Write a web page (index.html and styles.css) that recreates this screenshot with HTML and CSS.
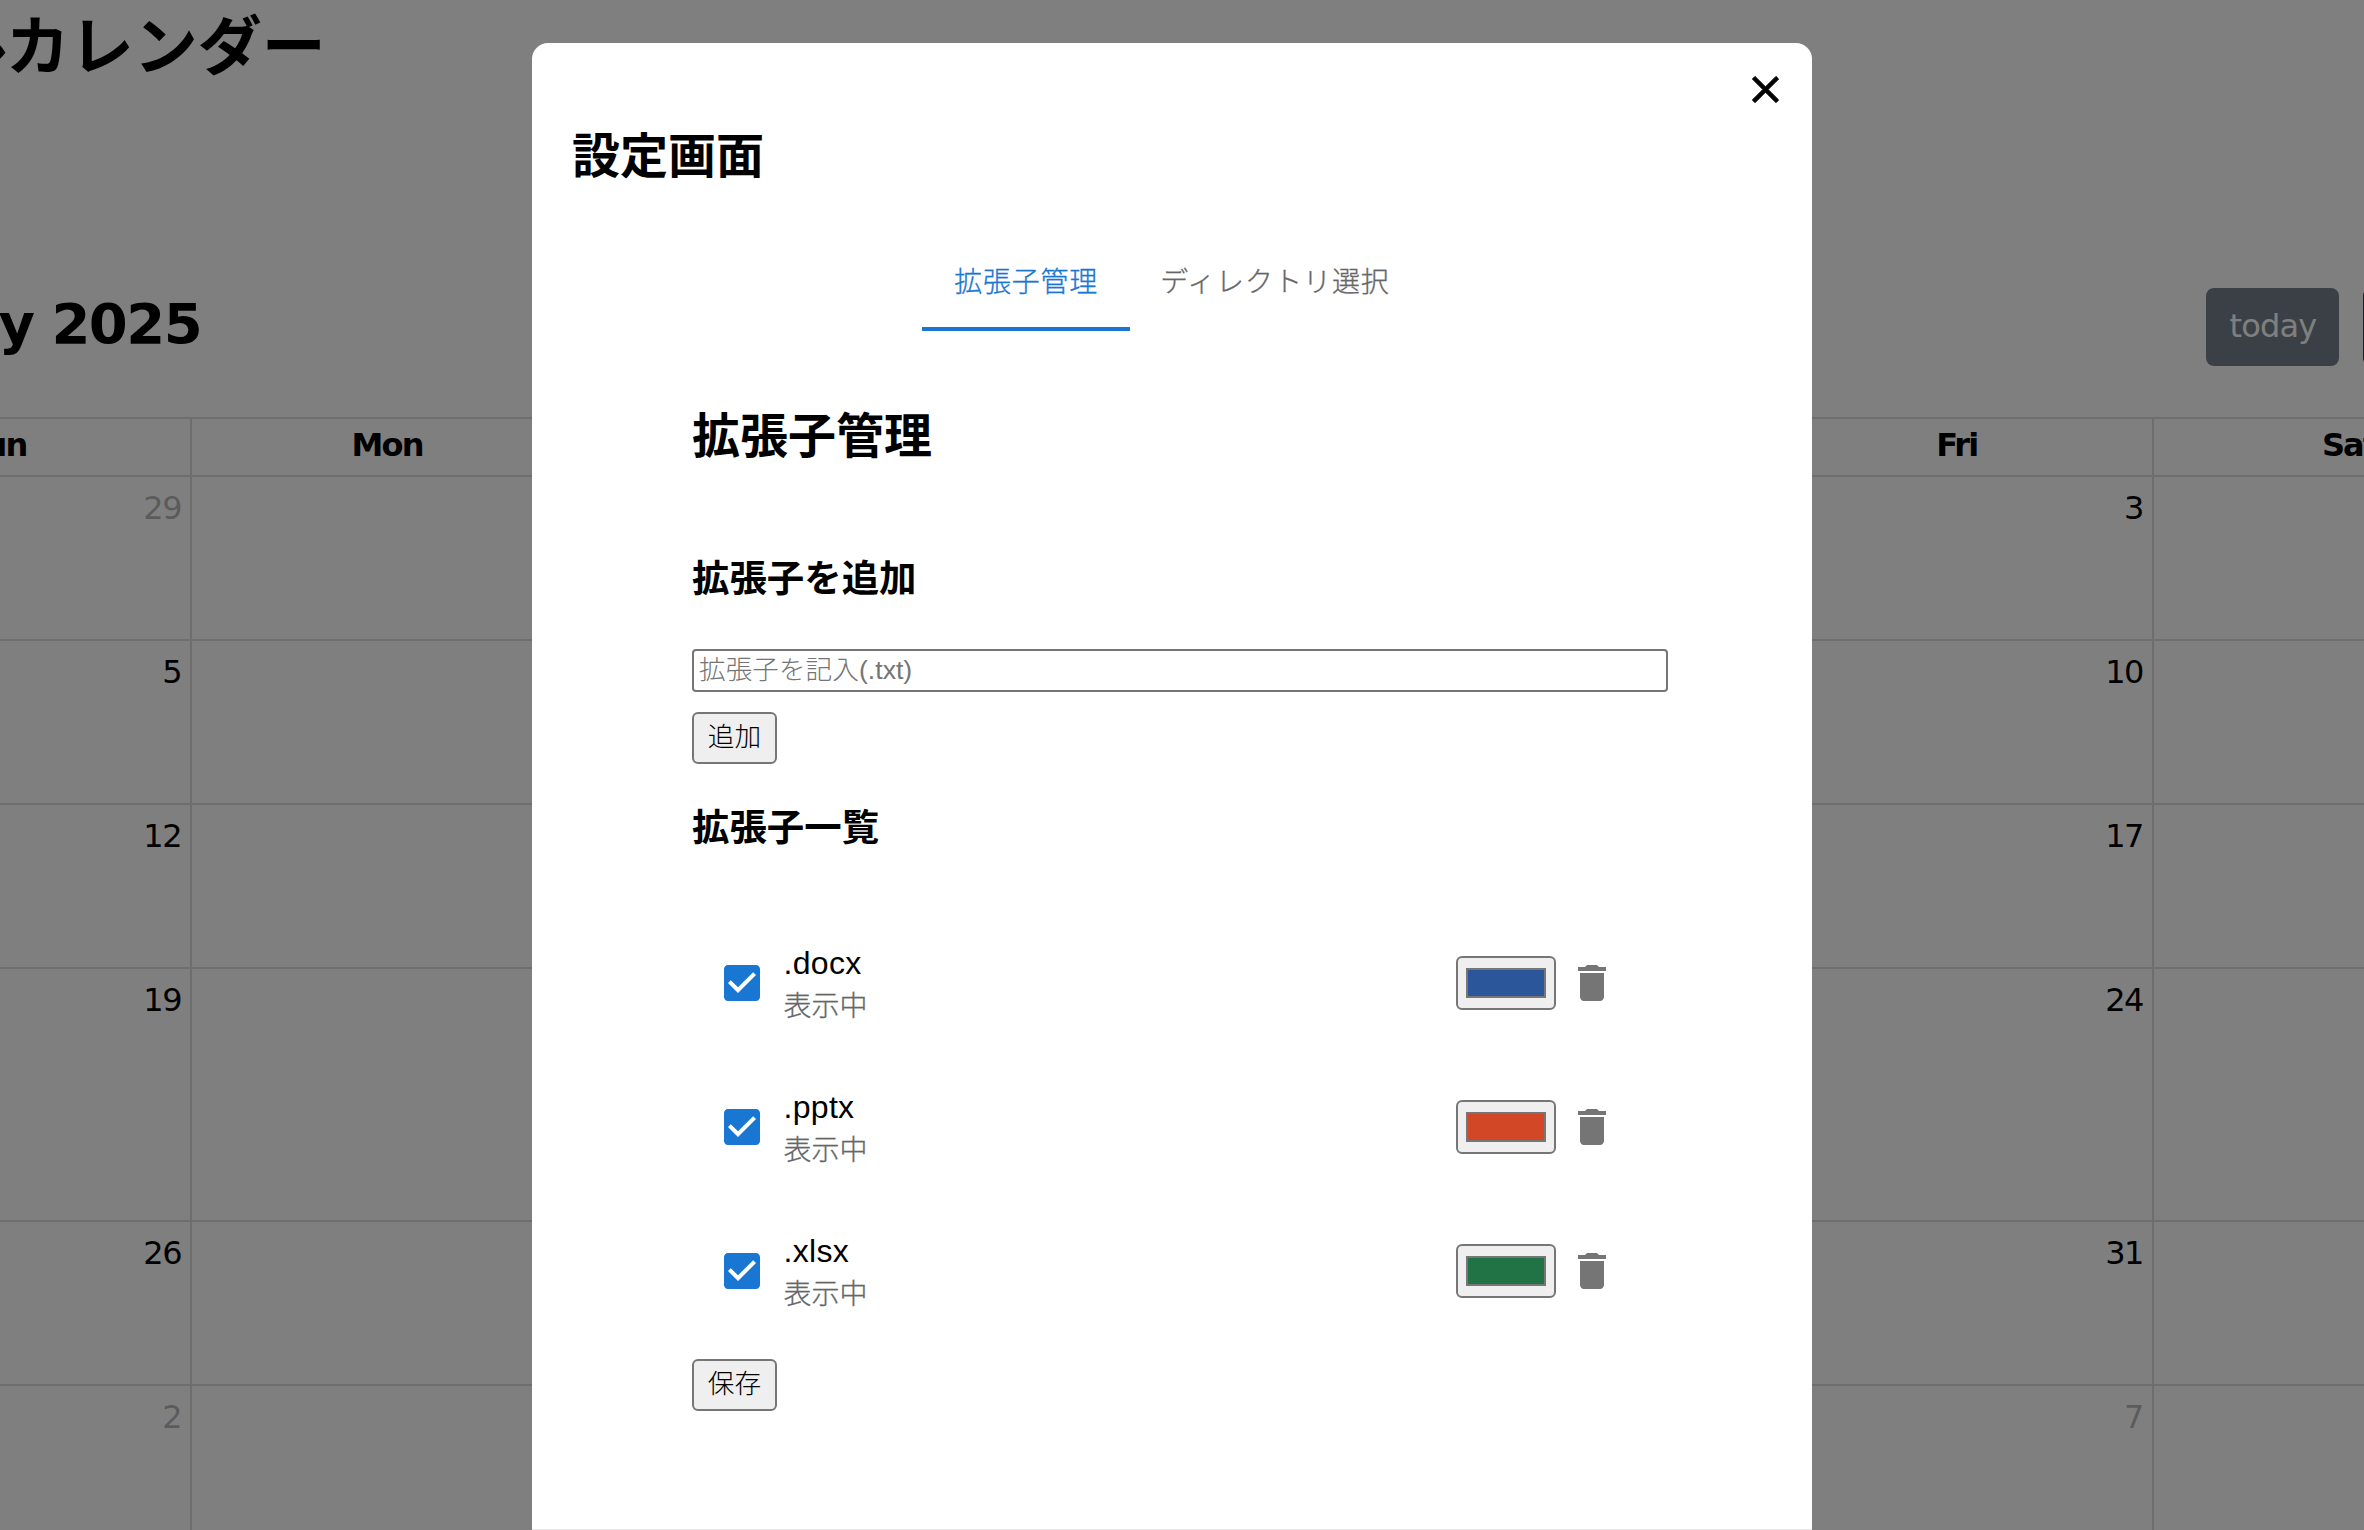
FILE: index.html
```html
<!DOCTYPE html>
<html lang="ja">
<head>
<meta charset="utf-8">
<title>設定画面</title>
<link rel="stylesheet" href="styles.css">
</head>
<body>
<main class="page">
  <h1 class="app-title">ファイルカレンダー</h1>
  <section class="calendar">
    <div class="toolbar">
      <h2 class="cal-title">January 2025</h2>
      <div class="toolbar-actions">
        <button class="cal-btn cal-today" type="button" disabled>today</button>
        <div class="cal-nav">
          <button class="cal-btn cal-arrow cal-arrow-l" type="button" aria-label="prev"></button>
          <button class="cal-btn cal-arrow cal-arrow-r" type="button" aria-label="next"></button>
        </div>
      </div>
    </div>
    <div class="grid">
      <div class="dow">Sun</div><div class="dow">Mon</div><div class="dow">Tue</div><div class="dow">Wed</div><div class="dow">Thu</div><div class="dow">Fri</div><div class="dow">Sat</div>
      <div class="day dim">29</div><div class="day dim">30</div><div class="day dim">31</div><div class="day">1</div><div class="day">2</div><div class="day">3</div><div class="day">4</div>
      <div class="day">5</div><div class="day">6</div><div class="day">7</div><div class="day">8</div><div class="day">9</div><div class="day">10</div><div class="day">11</div>
      <div class="day">12</div><div class="day">13</div><div class="day">14</div><div class="day">15</div><div class="day">16</div><div class="day">17</div><div class="day">18</div>
      <div class="day">19</div><div class="day">20</div><div class="day">21</div><div class="day">22</div><div class="day">23</div><div class="day">24</div><div class="day">25</div>
      <div class="day">26</div><div class="day">27</div><div class="day">28</div><div class="day">29</div><div class="day">30</div><div class="day">31</div><div class="day dim">1</div>
      <div class="day dim">2</div><div class="day dim">3</div><div class="day dim">4</div><div class="day dim">5</div><div class="day dim">6</div><div class="day dim">7</div><div class="day dim">8</div>
    </div>
  </section>
</main>

<div class="overlay">
  <div class="modal">
    <button class="close" type="button" aria-label="閉じる">
      <svg viewBox="0 0 24 24" class="close-icon"><path d="M19 6.41 17.59 5 12 10.59 6.41 5 5 6.41 10.59 12 5 17.59 6.41 19 12 13.41 17.59 19 19 17.59 13.41 12z"/></svg>
    </button>
    <h2 class="modal-title">設定画面</h2>
    <div class="tabs">
      <div class="tab tab-active">拡張子管理</div>
      <div class="tab tab-second">ディレクトリ選択</div>
    </div>
    <div class="panel">
      <h2 class="panel-title">拡張子管理</h2>
      <h3 class="section-title section-add">拡張子を追加</h3>
      <input class="ext-input" type="text" placeholder="拡張子を記入(.txt)">
      <button class="plain-btn add-btn" type="button">追加</button>
      <h3 class="section-title section-list">拡張子一覧</h3>
      <ul class="ext-list">
        <li class="ext-row">
          <svg viewBox="0 0 24 24" class="check"><path d="M19 3H5c-1.11 0-2 .9-2 2v14c0 1.1.89 2 2 2h14c1.1 0 2-.9 2-2V5c0-1.1-.89-2-2-2zm-9 14l-5-5 1.41-1.41L10 14.17l7.59-7.59L19 8l-9 9z"/></svg>
          <div class="ext-text"><div class="ext-name">.docx</div><div class="ext-state">表示中</div></div>
          <input class="swatch" type="color" value="#2b579a">
          <svg viewBox="0 0 24 24" class="trash"><path d="M6 19c0 1.1.9 2 2 2h8c1.1 0 2-.9 2-2V7H6v12zM19 4h-3.5l-1-1h-5l-1 1H5v2h14V4z"/></svg>
        </li>
        <li class="ext-row">
          <svg viewBox="0 0 24 24" class="check"><path d="M19 3H5c-1.11 0-2 .9-2 2v14c0 1.1.89 2 2 2h14c1.1 0 2-.9 2-2V5c0-1.1-.89-2-2-2zm-9 14l-5-5 1.41-1.41L10 14.17l7.59-7.59L19 8l-9 9z"/></svg>
          <div class="ext-text"><div class="ext-name">.pptx</div><div class="ext-state">表示中</div></div>
          <input class="swatch" type="color" value="#d24726">
          <svg viewBox="0 0 24 24" class="trash"><path d="M6 19c0 1.1.9 2 2 2h8c1.1 0 2-.9 2-2V7H6v12zM19 4h-3.5l-1-1h-5l-1 1H5v2h14V4z"/></svg>
        </li>
        <li class="ext-row">
          <svg viewBox="0 0 24 24" class="check"><path d="M19 3H5c-1.11 0-2 .9-2 2v14c0 1.1.89 2 2 2h14c1.1 0 2-.9 2-2V5c0-1.1-.89-2-2-2zm-9 14l-5-5 1.41-1.41L10 14.17l7.59-7.59L19 8l-9 9z"/></svg>
          <div class="ext-text"><div class="ext-name">.xlsx</div><div class="ext-state">表示中</div></div>
          <input class="swatch" type="color" value="#217346">
          <svg viewBox="0 0 24 24" class="trash"><path d="M6 19c0 1.1.9 2 2 2h8c1.1 0 2-.9 2-2V7H6v12zM19 4h-3.5l-1-1h-5l-1 1H5v2h14V4z"/></svg>
        </li>
      </ul>
      <button class="plain-btn save-btn" type="button">保存</button>
    </div>
  </div>
</div>
</body>
</html>
```
FILE: styles.css
```css
* { box-sizing: border-box; }
html, body {
  margin: 0;
  height: 1530px;
  overflow: hidden;
  background: #fff;
  color: #000;
}
body { font-family: "Liberation Sans", "Noto Sans CJK JP", sans-serif; }

/* Calendar behind the dialog (page scrolled sideways) */
.page {
  width: 2746.8px;
  margin-left: -200.4px;
  font-family: "DejaVu Sans", "Noto Sans CJK JP", sans-serif;
}
.app-title {
  margin: 9px 0 215px -48px;
  font: 700 64px/64px "Noto Sans CJK JP", sans-serif;
  white-space: nowrap;
}
.toolbar {
  display: flex;
  justify-content: space-between;
  align-items: center;
  height: 78px;
  margin-bottom: 51px;
}
.cal-title {
  margin: 0 0 0 4px;
  font-size: 56px;
  line-height: 78px;
  font-weight: 700;
  letter-spacing: -1.5px;
  position: relative;
  top: -3px;
}
.toolbar-actions { display: flex; gap: 24px; }
.cal-nav { display: flex; }
.cal-btn {
  height: 78px;
  padding: 0;
  border: 2px solid #2c3e50;
  background: #2c3e50;
  color: #fff;
  font: 400 32px/48px "DejaVu Sans", sans-serif;
}
.cal-today {
  width: 133px;
  padding-bottom: 3px;
  border-radius: 8px;
  opacity: .65;
  letter-spacing: -.8px;
}
.cal-arrow { width: 91.5px; }
.cal-arrow-l { border-radius: 8px 0 0 8px; }
.cal-arrow-r { border-radius: 0 8px 8px 0; }

.grid {
  display: grid;
  grid-template-columns: repeat(7, 392.4px);
  grid-template-rows: 58px 164px 164px 164px 253px 164px 164px;
  border-top: 2px solid #ddd;
}
.dow {
  border-right: 2px solid #ddd;
  border-bottom: 2px solid #ddd;
  text-align: center;
  font-size: 32px;
  line-height: 52px;
  font-weight: 700;
  letter-spacing: -1.8px;
}
.day {
  border-right: 2px solid #ddd;
  border-bottom: 2px solid #ddd;
  padding: 9px 9px 0 0;
  text-align: right;
  font-size: 32px;
  line-height: 44px;
  letter-spacing: -1.5px;
}
.dim { color: rgba(0, 0, 0, .3); }

/* Dialog */
.overlay {
  position: fixed;
  inset: 0;
  display: flex;
  justify-content: center;
  align-items: flex-start;
  padding: 43px 20px 0 0;
  background: rgba(0, 0, 0, .5);
}
.modal {
  position: relative;
  width: 1280px;
  height: 1487px;
  padding: 82px 0 0;
  background: #fff;
  border-radius: 16px 16px 0 0;
  border-bottom: 1px solid #e6e6e6;
}
.close {
  position: absolute;
  top: 24px;
  right: 24px;
  width: 45px;
  height: 45px;
  padding: 0;
  border: 0;
  background: none;
}
.close-icon { display: block; width: 45px; height: 45px; fill: #000; stroke: #000; stroke-width: .5; }
.modal-title {
  margin: 0 0 46px 40px;
  font-size: 48px;
  line-height: 64px;
  font-weight: 700;
}
.tabs { display: flex; justify-content: center; }
.tab {
  height: 96px;
  padding: 0 32px 6px;
  display: flex;
  align-items: center;
  font-size: 28px;
  font-weight: 300;
  -webkit-text-stroke: .3px;
  letter-spacing: .8px;
  color: #666;
  white-space: nowrap;
}
.tab-second { padding-left: 30px; letter-spacing: .95px; }
.tab-active {
  color: #1976d2;
  box-shadow: inset 0 -4px 0 #1976d2;
}
.panel { padding: 74px 144px 0 160px; }
.panel-title {
  margin: 0 0 85px;
  font-size: 48px;
  line-height: 64px;
  font-weight: 700;
}
.section-title {
  margin: 0;
  font-size: 37.44px;
  line-height: 50px;
  font-weight: 700;
}
.section-add { margin-bottom: 45px; }
.section-list { margin: 39px 0 58px; }
.ext-input {
  display: block;
  width: 100%;
  height: 43px;
  padding: 0 5px;
  border: 2px solid #767676;
  border-radius: 4px;
  font: 300 26.67px/36px "Liberation Sans", "Noto Sans CJK JP", sans-serif;
  background: #fff;
}
.ext-input::placeholder { color: #757575; opacity: 1; }
.plain-btn {
  display: block;
  width: 85px;
  height: 52px;
  padding: 0;
  border: 2px solid #767676;
  border-radius: 6px;
  background: #efefef;
  color: #000;
  font: 300 26.67px/42px "Liberation Sans", "Noto Sans CJK JP", sans-serif;
}
.add-btn { margin-top: 20px; padding-bottom: 2px; }
.save-btn { margin-top: 16px; padding-bottom: 2px; }
.ext-list { margin: 0; padding: 0; list-style: none; }
.ext-row {
  display: flex;
  align-items: center;
  height: 144px;
  padding: 0 52px 0 26px;
}
.check { flex: none; width: 48px; height: 48px; fill: #1976d2; }
.ext-text { flex: 1; margin-left: 17.5px; }
.ext-name { font-size: 32px; line-height: 48px; letter-spacing: .3px; }
.ext-state { font-size: 28px; font-weight: 300; -webkit-text-stroke: .3px; line-height: 40px; color: #666; }
.swatch {
  flex: none;
  width: 100px;
  height: 54px;
  padding: 10px 8px;
  border: 2px solid #767676;
  border-radius: 6px;
  background: #efefef;
  margin: 0 12px 0 0;
}
.swatch::-webkit-color-swatch-wrapper { padding: 0; }
.swatch::-webkit-color-swatch { border: 2px solid #767676; border-radius: 0; }
.trash { flex: none; width: 48px; height: 48px; fill: #757575; }
```
